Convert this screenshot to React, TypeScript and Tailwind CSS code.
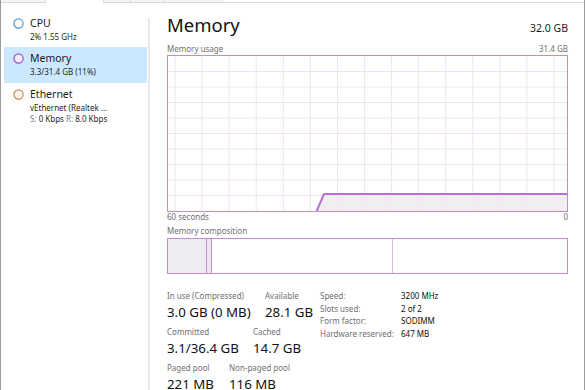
import React from "react";

const FONT = { fontFamily: '"Noto Sans", "Open Sans", sans-serif' };

const GRID_X = Array.from({ length: 15 }, (_, i) => 7 + i * 27.07);
const GRID_Y = Array.from({ length: 9 }, (_, i) => (i + 1) * 15.5);

function Circle({ stroke, fill }: { stroke: string; fill: string }) {
  return (
    <svg width="11" height="11" viewBox="0 0 11 11" className="shrink-0">
      <circle cx="5.5" cy="5.5" r="4.6" fill={fill} stroke={stroke} strokeWidth="1.2" />
    </svg>
  );
}

function SideItem({
  title,
  lines,
  stroke,
  fill,
  selected,
  className,
}: {
  title: string;
  lines: React.ReactNode[];
  stroke: string;
  fill: string;
  selected?: boolean;
  className?: string;
}) {
  return (
    <div
      className={`ml-[3px] mr-px flex gap-[6px] pl-[9px] pt-[4px] ${
        selected ? "bg-[#cce8ff]" : ""
      } ${className ?? ""}`}
    >
      <div className="mt-[2px]">
        <Circle stroke={stroke} fill={fill} />
      </div>
      <div>
        <div className="text-[10.5px] leading-[15px] text-[#1a1a1a]">{title}</div>
        {lines.map((l, i) => (
          <div key={i} className="text-[8px] leading-[11px] text-[#262626]">
            {l}
          </div>
        ))}
      </div>
    </div>
  );
}

function UsageChart() {
  return (
    <div className="h-[157px] w-full border border-[#c48ad9]">
      <svg width="399" height="155" viewBox="0 0 399 155" className="block">
        {GRID_X.map((x) => (
          <line key={`x${x}`} x1={x} y1="0" x2={x} y2="155" stroke="#f0e3f5" strokeWidth="1" />
        ))}
        {GRID_Y.map((y) => (
          <line key={`y${y}`} x1="0" y1={y} x2="399" y2={y} stroke="#f0e3f5" strokeWidth="1" />
        ))}
        <polygon points="148.7,155 156,138 399,138 399,155" fill="#efecf1" fillOpacity="0.9" />
        <polyline
          points="148.7,155 156,138 399,138"
          fill="none"
          stroke="#b771d0"
          strokeWidth="2"
        />
      </svg>
    </div>
  );
}

function CompositionBar() {
  return (
    <div className="flex h-[36px] w-full border border-[#c48ad9]">
      <div className="w-[38px] bg-[#efecf1]" />
      <div className="w-[6px] border-x border-[#c48ad9] bg-[#f1e3f6]" />
      <div className="w-[181px] border-r border-[#dcbde8]" />
      <div className="flex-1" />
    </div>
  );
}

function Stat({ label, value, w }: { label: string; value: string; w?: string }) {
  return (
    <div className={w}>
      <div className="text-[8px] leading-[12px] text-[#707070]">{label}</div>
      <div className="text-[13.3px] leading-[21px] text-[#111]">{value}</div>
    </div>
  );
}

const SPECS: [string, string][] = [
  ["Speed:", "3200 MHz"],
  ["Slots used:", "2 of 2"],
  ["Form factor:", "SODIMM"],
  ["Hardware reserved:", "647 MB"],
];

export default function App() {
  return (
    <div
      style={FONT}
      className="flex h-[390px] w-[585px] flex-col overflow-hidden border-x border-[#9c9c9c] bg-white"
    >
      {/* tab strip remnants */}
      <div className="flex h-[3px] shrink-0">
        <div className="w-[45px] border-b border-r border-[#dadada] bg-[#f4f4f4]" />
        <div className="w-[58px] border-r border-[#dadada] bg-white" />
        <div className="w-[27px] border-b border-r border-[#dadada] bg-[#f4f4f4]" />
        <div className="w-[33px] border-b border-r border-[#dadada] bg-[#f4f4f4]" />
        <div className="w-[59px] border-b border-r border-[#dadada] bg-[#f4f4f4]" />
        <div className="flex-1 border-b border-[#dadada]" />
      </div>

      <div className="flex min-h-0 flex-1">
        {/* sidebar */}
        <div className="w-[147px] shrink-0 pt-[9px]">
          <SideItem
            title="CPU"
            lines={["2% 1.55 GHz"]}
            stroke="#4f9ad6"
            fill="#ffffff"
            className="h-[35px]"
          />
          <SideItem
            title="Memory"
            lines={["3.3/31.4 GB (11%)"]}
            stroke="#a94fc8"
            fill="#f6ecfa"
            selected
            className="h-[36px]"
          />
          <SideItem
            title="Ethernet"
            lines={[
              "vEthernet (Realtek ...",
              <>
                <span className="text-[#7a7a7a]">S:</span> 0 Kbps{" "}
                <span className="text-[#7a7a7a]">R:</span> 8.0 Kbps
              </>,
            ]}
            stroke="#cc8b4c"
            fill="#fdf5ec"
          />
        </div>

        {/* separator */}
        <div className="mt-[15px] w-[2px] shrink-0 bg-[#e9e9e9]" />

        {/* main panel */}
        <div className="flex w-[434px] flex-col pl-[17px] pr-[16px] pt-[8px]">
          <div className="flex items-baseline justify-between">
            <div className="text-[18.5px] leading-[28px] text-[#111]">Memory</div>
            <div className="text-[10.5px] text-[#1a1a1a]">32.0 GB</div>
          </div>

          <div className="mt-[4px] flex justify-between text-[8px] leading-[12px] text-[#707070]">
            <span>Memory usage</span>
            <span>31.4 GB</span>
          </div>
          <UsageChart />
          <div className="flex justify-between text-[8px] leading-[10px] text-[#707070]">
            <span>60 seconds</span>
            <span>0</span>
          </div>

          <div className="mt-[3px] text-[8px] leading-[12px] text-[#707070]">
            Memory composition
          </div>
          <div className="mt-px">
            <CompositionBar />
          </div>

          <div className="mt-[16px] flex">
            <div className="w-[153px] shrink-0">
              <div className="mb-[3px] flex">
                <Stat label="In use (Compressed)" value="3.0 GB (0 MB)" w="w-[98px]" />
                <Stat label="Available" value="28.1 GB" />
              </div>
              <div className="mb-[3px] flex">
                <Stat label="Committed" value="3.1/36.4 GB" w="w-[86px]" />
                <Stat label="Cached" value="14.7 GB" />
              </div>
              <div className="flex">
                <Stat label="Paged pool" value="221 MB" w="w-[62px]" />
                <Stat label="Non-paged pool" value="116 MB" />
              </div>
            </div>
            <div className="flex flex-col">
              {SPECS.map(([k, v]) => (
                <div key={k} className="flex text-[8px] leading-[12.5px]">
                  <span className="w-[81px] text-[#707070]">{k}</span>
                  <span className="text-[#111]">{v}</span>
                </div>
              ))}
            </div>
          </div>
        </div>
      </div>
    </div>
  );
}
